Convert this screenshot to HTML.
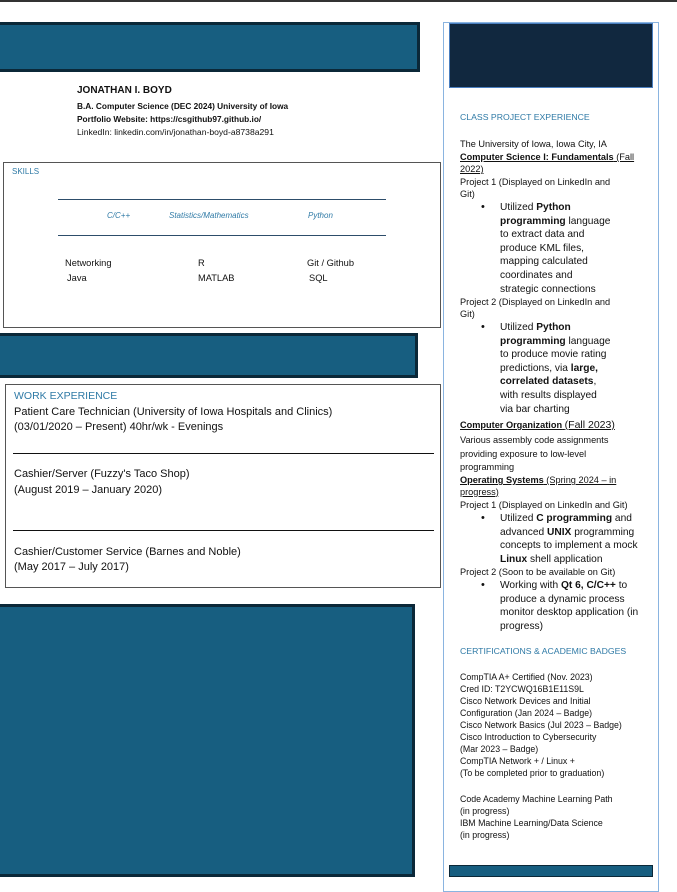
<!DOCTYPE html>
<html><head><meta charset="utf-8"><style>
*{margin:0;padding:0;box-sizing:border-box}
body{width:677px;height:882px;background:#fff;position:relative;overflow:hidden;font-family:"Liberation Sans",sans-serif;color:#111}
.a{position:absolute;white-space:nowrap}
.ban{position:absolute;background:#175e80;border:3px solid #0b2838;border-left:none}
.t{color:#2f7aa6}
.r{position:absolute;left:460px;font-size:9.2px;line-height:12.5px;white-space:nowrap}
.b{font-weight:bold}
.u{text-decoration:underline}
.bl{position:absolute;left:500px;font-size:10.2px;line-height:13.6px;white-space:nowrap}
.dot{position:absolute;left:481px;font-size:11px}
</style></head><body>
<div class="a" style="left:0;top:0;width:677px;height:2px;background:#333"></div>
<div class="ban" style="left:0;top:22px;width:420px;height:50px"></div>
<div class="a b" style="left:77px;top:85px;font-size:10px">JONATHAN I. BOYD</div>
<div class="a b" style="left:77px;top:101px;font-size:8.3px">B.A. Computer Science (DEC 2024) University of Iowa</div>
<div class="a b" style="left:77px;top:114px;font-size:8.3px">Portfolio Website: https://csgithub97.github.io/</div>
<div class="a" style="left:77px;top:127px;font-size:8.6px">LinkedIn: linkedin.com/in/jonathan-boyd-a8738a291</div>

<div class="a" style="left:3px;top:162px;width:438px;height:166px;border:1px solid #555"></div>
<div class="a t" style="left:12px;top:167px;font-size:8px">SKILLS</div>
<div class="a" style="left:58px;top:199px;width:328px;height:1px;background:#2d4d6a"></div>
<div class="a" style="left:58px;top:235px;width:328px;height:1px;background:#2d4d6a"></div>
<div class="a t" style="left:107px;top:211px;font-size:8px;font-style:italic">C/C++</div>
<div class="a t" style="left:169px;top:211px;font-size:8px;font-style:italic">Statistics/Mathematics</div>
<div class="a t" style="left:308px;top:211px;font-size:8px;font-style:italic">Python</div>
<div class="a" style="left:65px;top:258px;font-size:9.3px">Networking</div>
<div class="a" style="left:67px;top:273px;font-size:9.3px">Java</div>
<div class="a" style="left:198px;top:258px;font-size:9.3px">R</div>
<div class="a" style="left:198px;top:273px;font-size:9.3px">MATLAB</div>
<div class="a" style="left:307px;top:258px;font-size:9.3px">Git / Github</div>
<div class="a" style="left:309px;top:273px;font-size:9.3px">SQL</div>

<div class="ban" style="left:0;top:333px;width:418px;height:45px"></div>

<div class="a" style="left:5px;top:384px;width:436px;height:204px;border:1px solid #555"></div>
<div class="a t b" style="left:14px;top:390px;font-size:10.5px;font-weight:normal">WORK EXPERIENCE</div>
<div class="a" style="left:14px;top:406px;font-size:11px">Patient Care Technician (University of Iowa Hospitals and Clinics)</div>
<div class="a" style="left:14px;top:421px;font-size:11px">(03/01/2020 – Present) 40hr/wk - Evenings</div>
<div class="a" style="left:13px;top:453px;width:421px;height:1px;background:#111"></div>
<div class="a" style="left:14px;top:468px;font-size:11px">Cashier/Server (Fuzzy's Taco Shop)</div>
<div class="a" style="left:14px;top:484px;font-size:11px">(August 2019 – January 2020)</div>
<div class="a" style="left:13px;top:530px;width:421px;height:1px;background:#111"></div>
<div class="a" style="left:14px;top:546px;font-size:11px">Cashier/Customer Service (Barnes and Noble)</div>
<div class="a" style="left:14px;top:561px;font-size:11px">(May 2017 – July 2017)</div>

<div class="ban" style="left:0;top:604px;width:415px;height:273px"></div>

<div class="a" style="left:443px;top:22px;width:216px;height:870px;border:1px solid #8ab4e0"></div>
<div class="a" style="left:449px;top:23px;width:204px;height:65px;background:#11283f;border:1px solid #4a7fc0"></div>
<div class="a t" style="left:460px;top:112px;font-size:8.7px">CLASS PROJECT EXPERIENCE</div>
<div class="r" style="top:138px">The University of Iowa, Iowa City, IA</div>
<div class="r" style="top:151px"><span class="u"><b>Computer Science I: Fundamentals</b> (Fall</span></div>
<div class="r u" style="top:163px">2022)</div>
<div class="r" style="top:176px">Project 1 (Displayed on LinkedIn and</div>
<div class="r" style="top:188px">Git)</div>
<div class="dot" style="top:201px">•</div>
<div class="bl" style="top:201px">Utilized <b>Python</b><br><b>programming</b> language<br>to extract data and<br>produce KML files,<br>mapping calculated<br>coordinates and<br>strategic connections</div>
<div class="r" style="top:296px">Project 2 (Displayed on LinkedIn and</div>
<div class="r" style="top:308px">Git)</div>
<div class="dot" style="top:321px">•</div>
<div class="bl" style="top:321px">Utilized <b>Python</b><br><b>programming</b> language<br>to produce movie rating<br>predictions, via <b>large,</b><br><b>correlated datasets</b>,<br>with results displayed<br>via bar charting</div>
<div class="r u" style="top:419px"><b>Computer Organization</b> <span style="font-size:10.5px">(Fall 2023)</span></div>
<div class="r" style="top:434px;line-height:13.5px">Various assembly code assignments<br>providing exposure to low-level<br>programming</div>
<div class="r u" style="top:475px;line-height:11.5px"><b>Operating Systems</b> (Spring 2024 – in<br>progress)</div>
<div class="r" style="top:499px">Project 1 (Displayed on LinkedIn and Git)</div>
<div class="dot" style="top:512px">•</div>
<div class="bl" style="top:512px">Utilized <b>C programming</b> and<br>advanced <b>UNIX</b> programming<br>concepts to implement a mock<br><b>Linux</b> shell application</div>
<div class="r" style="top:566px">Project 2 (Soon to be available on Git)</div>
<div class="dot" style="top:579px">•</div>
<div class="bl" style="top:579px">Working with <b>Qt 6, C/C++</b> to<br>produce a dynamic process<br>monitor desktop application (in<br>progress)</div>
<div class="a t" style="left:460px;top:646px;font-size:8.7px">CERTIFICATIONS &amp; ACADEMIC BADGES</div>
<div class="r" style="top:671px;font-size:8.8px;line-height:12px">CompTIA A+ Certified (Nov. 2023)<br>Cred ID: T2YCWQ16B1E11S9L<br>Cisco Network Devices and Initial<br>Configuration (Jan 2024 – Badge)<br>Cisco Network Basics (Jul 2023 – Badge)<br>Cisco Introduction to Cybersecurity<br>(Mar 2023 – Badge)<br>CompTIA Network + / Linux +<br>(To be completed prior to graduation)</div>
<div class="r" style="top:793px;font-size:8.8px;line-height:12px">Code Academy Machine Learning Path<br>(in progress)<br>IBM Machine Learning/Data Science<br>(in progress)</div>
<div class="a" style="left:449px;top:865px;width:204px;height:12px;background:#175e80;border:1px solid #0b2838"></div>
</body></html>
